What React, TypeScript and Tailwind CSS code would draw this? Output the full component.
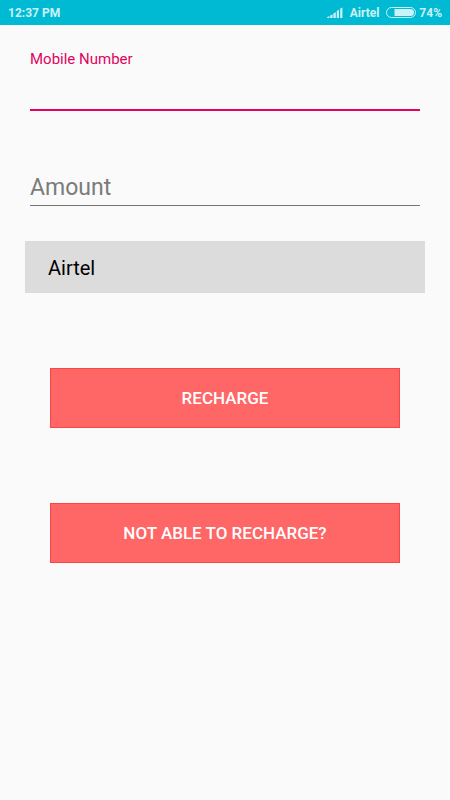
import { useState } from "react";

function StatusBar() {
  return (
    <header className="flex h-[25px] items-center justify-between bg-[#00bad4] px-2 text-xs font-bold text-[#cbf2f7]">
      <span>12:37 PM</span>
      <div className="flex items-center">
        <svg className="mr-[7px] h-3 w-4" viewBox="0 0 16 12" fill="currentColor" aria-hidden="true">
          <path d="M0 11V10.2L2.4 9V11Z" />
          <path d="M3.2 11V8.6L5.6 7.4V11Z" />
          <path d="M6.4 11V6.4L8.8 5.2V11Z" />
          <path d="M9.8 11V4L12 2.8V11Z" />
          <path d="M13.2 11V1.6L15.4 0.6V11Z" />
        </svg>
        <span>Airtel</span>
        <svg className="mr-[3px] ml-[7px] h-[11px] w-[30px]" viewBox="0 0 30 11" aria-hidden="true">
          <rect x="0.5" y="0.5" width="29" height="10" rx="5" fill="none" stroke="currentColor" />
          <path d="M8.5 2H24.5a3.5 3.5 0 0 1 0 7H8.5Z" fill="currentColor" />
        </svg>
        <span>74%</span>
      </div>
    </header>
  );
}

export default function App() {
  const [mobile, setMobile] = useState("");
  const [amount, setAmount] = useState("");

  return (
    <div className="min-h-screen bg-[#fafafa] font-['Roboto',sans-serif]">
      <StatusBar />
      <form className="flex flex-col px-[25px] pt-6" onSubmit={(e) => e.preventDefault()}>
        <div className="flex flex-col px-[5px]">
          <label htmlFor="mobile" className="text-[15px] leading-5 text-[#e0045f]">
            Mobile Number
          </label>
          <input
            id="mobile"
            type="tel"
            value={mobile}
            onChange={(e) => setMobile(e.target.value)}
            className="h-[42px] w-full border-b-2 border-[#e0045f] text-[23px] outline-none"
          />
          <input
            id="amount"
            type="text"
            inputMode="numeric"
            aria-label="Amount"
            placeholder="Amount"
            value={amount}
            onChange={(e) => setAmount(e.target.value)}
            className="mt-[55px] h-10 w-full border-b border-[#757575] pt-1 text-[23px] outline-none placeholder:text-[#7b7b7b]"
          />
        </div>

        <select
          aria-label="Operator"
          className="mt-[35px] h-[52px] w-full appearance-none bg-[#dcdcdc] px-[23px] pt-0.5 text-xl text-black outline-none"
        >
          <option>Airtel</option>
        </select>

        <div className="mt-[75px] flex flex-col gap-[75px] px-[25px]">
          <button
            type="submit"
            className="h-[60px] w-full border border-[#ff4444] bg-[#ff6666] pt-0.5 text-[17px] font-medium text-white"
          >
            RECHARGE
          </button>
          <button
            type="button"
            className="h-[60px] w-full border border-[#ff4444] bg-[#ff6666] pt-0.5 text-[17px] font-medium text-white"
          >
            NOT ABLE TO RECHARGE?
          </button>
        </div>
      </form>
    </div>
  );
}
